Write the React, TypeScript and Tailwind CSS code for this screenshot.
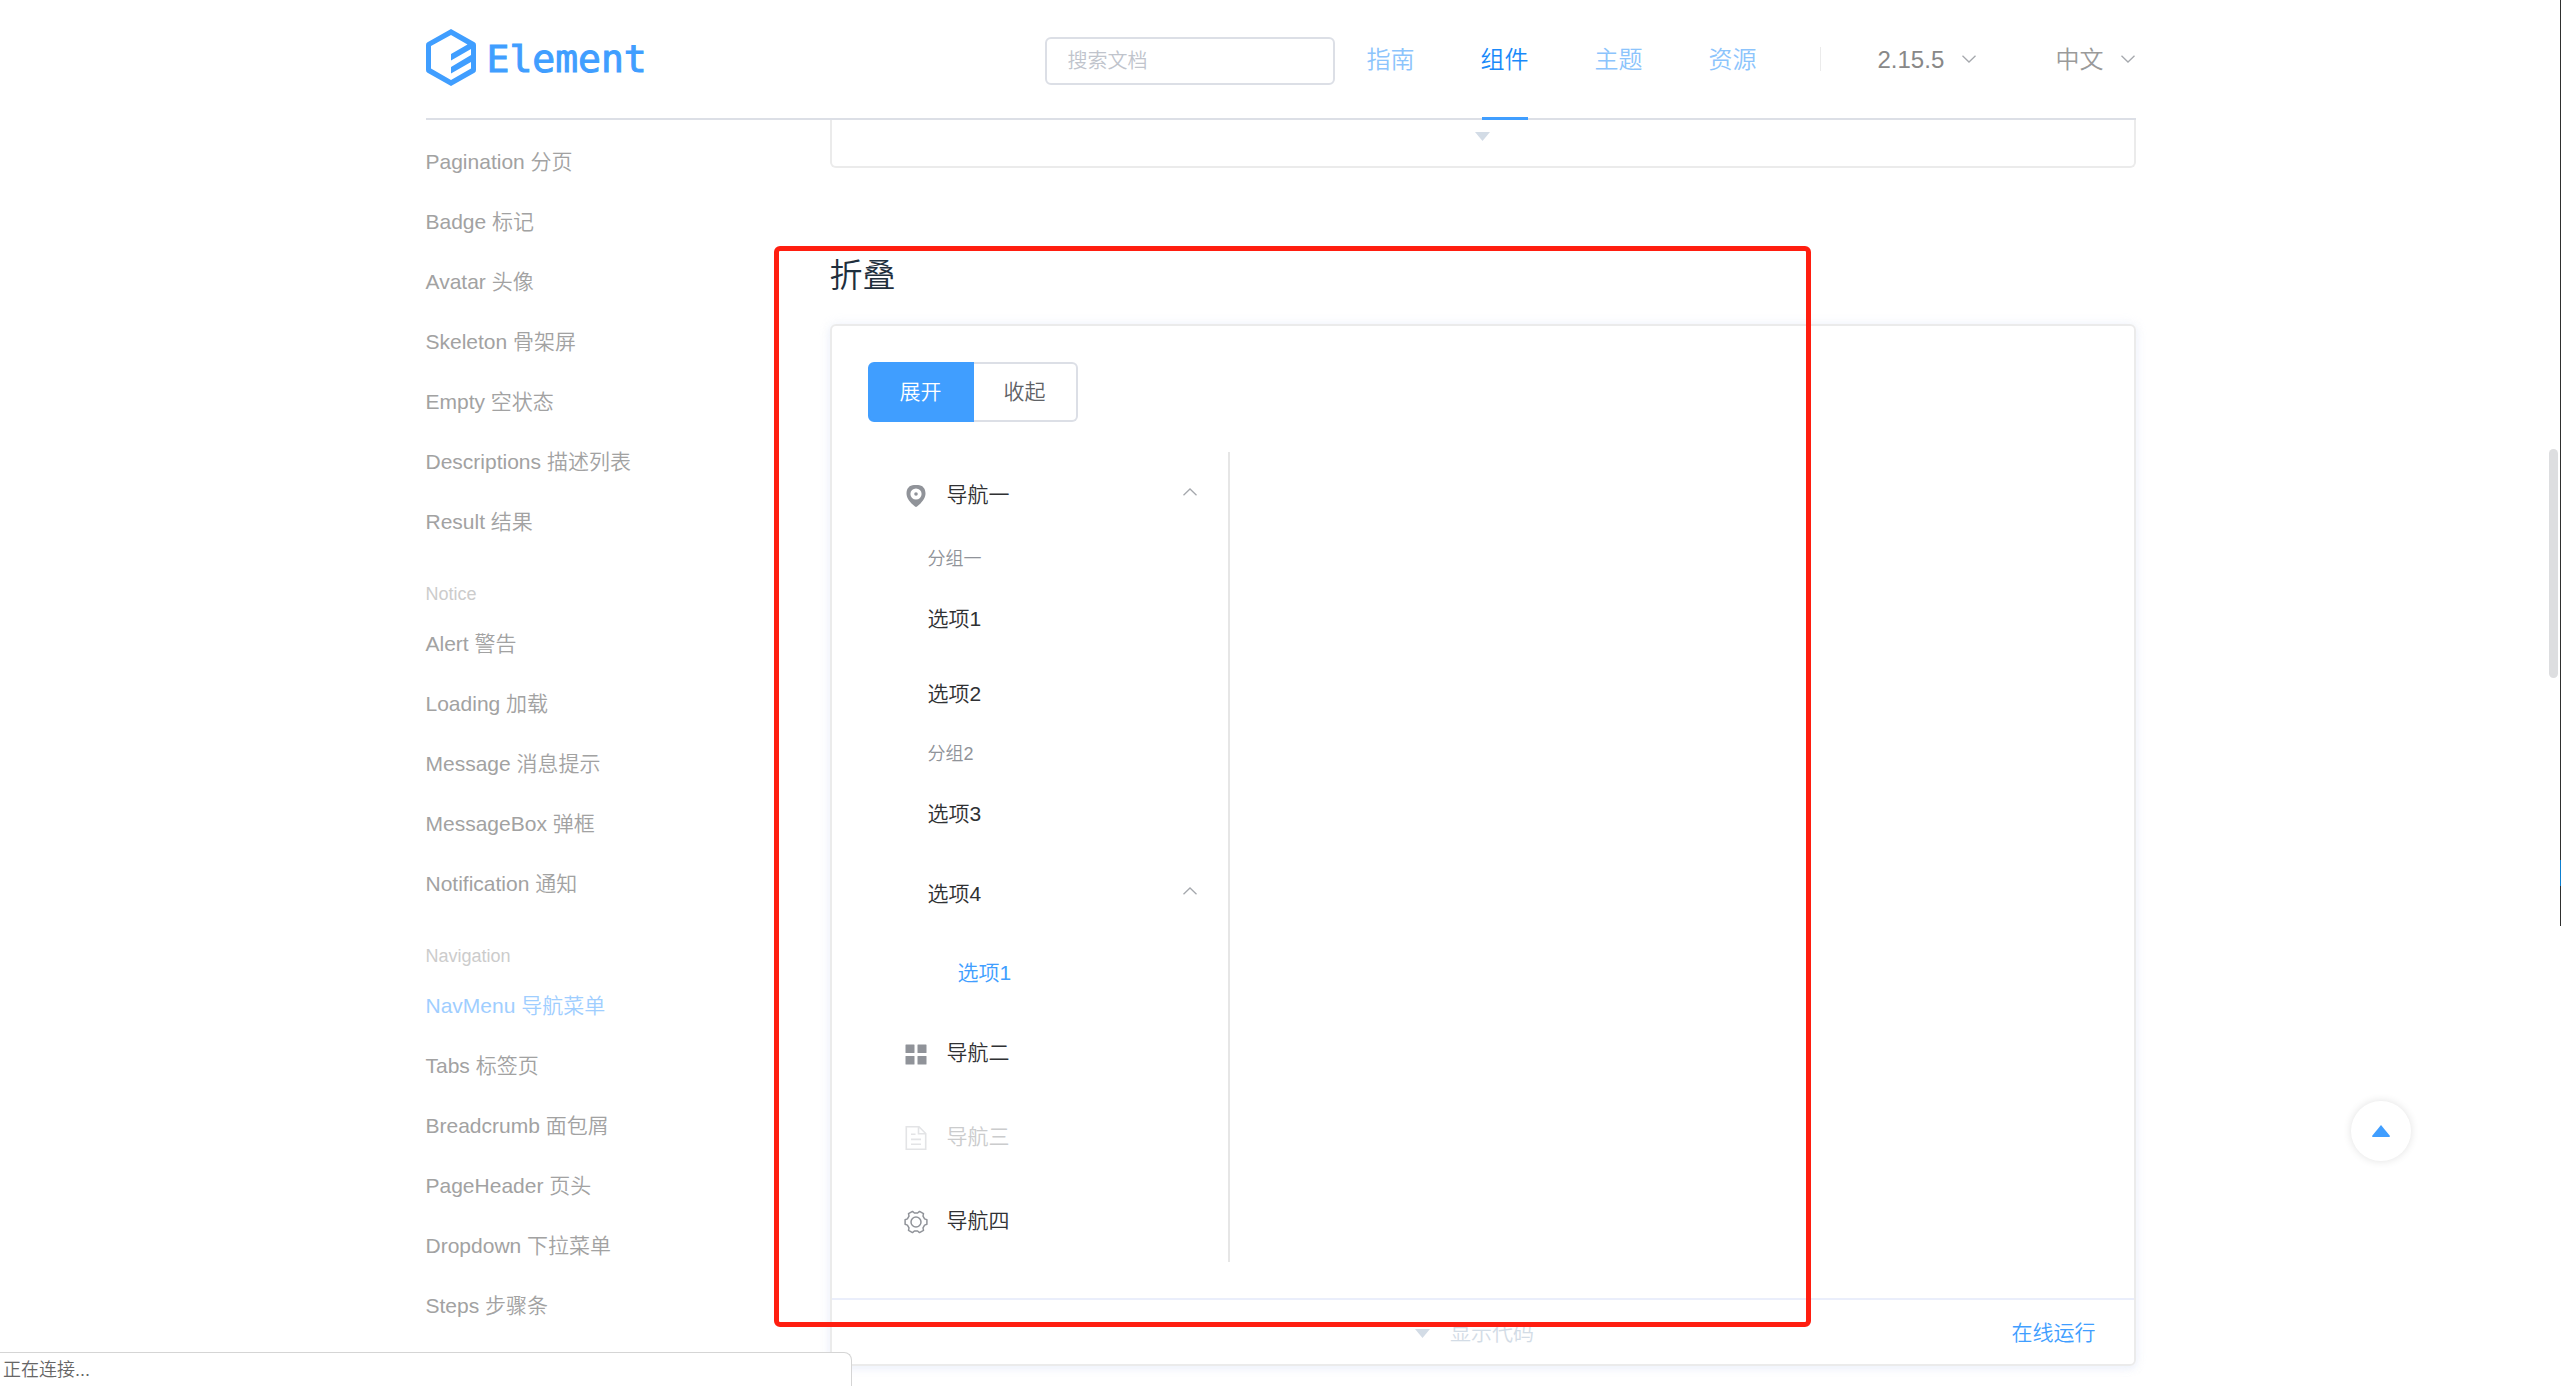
import { useState } from 'react';
import type { ReactNode } from 'react';
import clsx from 'clsx';

interface NavGroup {
    title?: string;
    items: string[];
}

const navLinks = ['指南', '组件', '主题', '资源'];

const sidebarGroups: NavGroup[] = [
    {
        items: [
            'Pagination 分页',
            'Badge 标记',
            'Avatar 头像',
            'Skeleton 骨架屏',
            'Empty 空状态',
            'Descriptions 描述列表',
            'Result 结果',
        ],
    },
    {
        title: 'Notice',
        items: ['Alert 警告', 'Loading 加载', 'Message 消息提示', 'MessageBox 弹框', 'Notification 通知'],
    },
    {
        title: 'Navigation',
        items: [
            'NavMenu 导航菜单',
            'Tabs 标签页',
            'Breadcrumb 面包屑',
            'PageHeader 页头',
            'Dropdown 下拉菜单',
            'Steps 步骤条',
        ],
    },
];

function LogoMark() {
    return (
        <svg viewBox="0 0 50 57" className="h-[57px] w-[50px]" fill="#409eff" aria-hidden="true">
            <path
                fillRule="evenodd"
                d="M25 0 L48.5 13.2 Q50 14 50 16 V41 Q50 43 48.5 43.8 L25 57 L1.5 43.8 Q0 43 0 41 V16 Q0 14 1.5 13.2Z M5 17 V39.5 L25 51 L45 39.5 V33 L25 44.5 V38 L45 26 V20 L25 31.5 V25 L41.5 15.5 L25 6Z"
            />
        </svg>
    );
}

function Chevron({ up = false, className }: { up?: boolean; className?: string }) {
    return (
        <svg viewBox="0 0 16 8" className={clsx('h-2 w-4', className)} fill="none" stroke="#a5a8ad" strokeWidth="1.3" aria-hidden="true">
            <path d={up ? 'M1.5 7.2 L8 1 L14.5 7.2' : 'M1.5 0.8 L8 7 L14.5 0.8'} />
        </svg>
    );
}

function CaretDown() {
    return (
        <svg viewBox="0 0 15 9" className="h-[9px] w-[15px]" fill="#d3dce6" aria-hidden="true">
            <path d="M0 0 H15 L7.5 9Z" />
        </svg>
    );
}

function LocationIcon() {
    return (
        <svg viewBox="0 0 24 24" className="size-6" fill="#909399" aria-hidden="true">
            <path
                fillRule="evenodd"
                d="M10 1 H14 C18.5 1 21.5 4.5 21.5 9.5 C21.5 14 18.5 17 16.5 19.5 L13 22.6 Q12 23.3 11 22.6 L7.5 19.5 C5.5 17 2.5 14 2.5 9.5 C2.5 4.5 5.5 1 10 1Z M12 4.4 a5.6 5.6 0 1 0 0 11.2 a5.6 5.6 0 1 0 0 -11.2Z"
            />
            <circle cx="12" cy="10" r="1.8" />
        </svg>
    );
}

function GridIcon() {
    return (
        <svg viewBox="0 0 24 24" className="size-6" fill="#909399" aria-hidden="true">
            <rect x="1.5" y="2.5" width="9" height="8.5" rx="0.5" />
            <rect x="13.5" y="2.5" width="9" height="8.5" rx="0.5" />
            <rect x="1.5" y="14" width="9" height="8.5" rx="0.5" />
            <rect x="13.5" y="14" width="9" height="8.5" rx="0.5" />
        </svg>
    );
}

function DocumentIcon() {
    return (
        <svg viewBox="0 0 24 24" className="size-6" fill="none" stroke="#e3e4e6" strokeWidth="1.6" aria-hidden="true">
            <path d="M2.3 0.8 H15 L21.7 7.5 V23.2 H2.3Z M14.5 1 V7.8 H21.5 M7 8.2 H11.5 M7 13.4 H17 M7 18.2 H17" />
        </svg>
    );
}

function SettingIcon() {
    return (
        <svg viewBox="0 0 24 24" className="size-6" fill="none" stroke="#909399" strokeWidth="1.5" strokeLinejoin="round" aria-hidden="true">
            <path d="M22.9 14.3 L20.6 15.1 L19 17.9 L19.5 20.3 L15.5 22.6 L13.6 21 H10.4 L8.5 22.6 L4.5 20.3 L5 17.9 L3.4 15.1 L1.1 14.3 V9.7 L3.4 8.9 L5 6.1 L4.5 3.7 L8.5 1.4 L10.4 3 H13.6 L15.5 1.4 L19.5 3.7 L19 6.1 L20.6 8.9 L22.9 9.7Z" />
            <circle cx="12" cy="12" r="5" />
        </svg>
    );
}

function HeaderSelect({ label, value, className }: { label: string; value: string; className: string }) {
    return (
        <label className={clsx('flex items-center gap-4', className)}>
            <select aria-label={label} className="appearance-none bg-transparent pt-0.5 text-2xl" defaultValue={value}>
                <option>{value}</option>
            </select>
            <Chevron />
        </label>
    );
}

function Header() {
    return (
        <header className="mx-auto flex h-[120px] w-full max-w-[1710px] items-stretch border-b-2 border-[#dcdfe6]">
            <a href="#" className="flex items-center gap-[11px] pb-1">
                <LogoMark />
                <span className="pt-1 font-['DejaVu_Sans_Mono',monospace] text-[38px] leading-none font-normal text-[#409eff] [-webkit-text-stroke:1px_#409eff]">
                    Element
                </span>
            </a>
            <div className="ml-auto flex items-center pt-1">
                <input
                    type="text"
                    aria-label="搜索文档"
                    placeholder="搜索文档"
                    className="mr-8 h-12 w-[290px] rounded-md border-2 border-[#dcdfe6] px-[21px] text-xl outline-none placeholder:text-[#c0c4cc]"
                />
            </div>
            <nav className="flex gap-[66px]">
                {navLinks.map((link) => (
                    <a
                        key={link}
                        href="#"
                        className={clsx(
                            'relative flex items-center pt-0.5 text-2xl',
                            link === '组件'
                                ? 'text-[#1989fa] after:absolute after:inset-x-px after:-bottom-0.5 after:h-[3px] after:bg-[#409eff]'
                                : 'text-[#8cc4fc]',
                        )}
                    >
                        {link}
                    </a>
                ))}
            </nav>
            <div className="ml-[63px] flex items-center">
                <span className="h-6 w-px bg-[#ebebeb]" />
                <HeaderSelect label="版本" value="2.15.5" className="ml-[57px] text-[#888]" />
                <HeaderSelect label="语言" value="中文" className="ml-[79px] text-[#9a9a9a]" />
            </div>
        </header>
    );
}

function Sidebar() {
    return (
        <aside className="w-[404px] shrink-0 pt-3">
            {sidebarGroups.map((group, index) => (
                <div key={index}>
                    {group.title && <div className="mt-[22px] text-lg leading-10 text-[#ccc]">{group.title}</div>}
                    <ul>
                        {group.items.map((item) => (
                            <li key={item}>
                                <a
                                    href="#"
                                    className={clsx(
                                        'block text-[21px] leading-[60px] whitespace-nowrap',
                                        item.startsWith('NavMenu') ? 'text-[#9fceff]' : 'text-[#a2a2a2]',
                                    )}
                                >
                                    {item}
                                </a>
                            </li>
                        ))}
                    </ul>
                </div>
            ))}
        </aside>
    );
}

function RootItem({ icon, label, disabled, open }: { icon: ReactNode; label: string; disabled?: boolean; open?: boolean }) {
    return (
        <button
            type="button"
            disabled={disabled}
            aria-expanded={open}
            className={clsx('flex h-[84px] w-full items-center px-[30px] pt-0.5', disabled ? 'text-[#cbcccd]' : 'text-[#303133]')}
        >
            <span className="mr-[13px] flex w-9 justify-center pt-0.5">{icon}</span>
            {label}
            {open && <Chevron up className="mb-1.5 ml-auto" />}
        </button>
    );
}

function GroupTitle({ children }: { children: ReactNode }) {
    return <div className="h-[45px] pl-[60px] text-lg leading-[47px] text-[#909399]">{children}</div>;
}

function MenuItem({ children, nested }: { children: ReactNode; nested?: boolean }) {
    return (
        <button
            type="button"
            className={clsx('block h-[75px] w-full text-left', nested ? 'pl-[90px] text-[#409eff]' : 'pl-[60px] text-[#303133]')}
        >
            {children}
        </button>
    );
}

function NavMenu() {
    return (
        <div className="mt-[30px] w-[362px] border-r-2 border-[#e6e6e6] text-[21px]">
            <RootItem icon={<LocationIcon />} label="导航一" open />
            <GroupTitle>分组一</GroupTitle>
            <MenuItem>选项1</MenuItem>
            <MenuItem>选项2</MenuItem>
            <GroupTitle>分组2</GroupTitle>
            <MenuItem>选项3</MenuItem>
            <button
                type="button"
                aria-expanded="true"
                className="flex h-[84px] w-full items-center pt-0.5 pr-[30px] pl-[60px] text-[#303133]"
            >
                选项4
                <Chevron up className="mb-1.5 ml-auto" />
            </button>
            <MenuItem nested>选项1</MenuItem>
            <RootItem icon={<GridIcon />} label="导航二" />
            <RootItem icon={<DocumentIcon />} label="导航三" disabled />
            <RootItem icon={<SettingIcon />} label="导航四" />
        </div>
    );
}

function CollapseDemo() {
    const [mode, setMode] = useState('展开');

    return (
        <section className="rounded-md border-2 border-[#ebebeb] shadow-[0_0_12px_rgba(232,237,250,0.6),0_3px_6px_rgba(232,237,250,0.5)]">
            <div className="p-9">
                <div className="flex text-[21px]">
                    {['展开', '收起'].map((option) => (
                        <label
                            key={option}
                            className={clsx(
                                'flex h-[60px] cursor-pointer items-center border-2 px-[30px] first:rounded-l-md last:rounded-r-md last:border-l-0',
                                mode === option ? 'border-[#409eff] bg-[#409eff] text-white' : 'border-[#dcdfe6] text-[#606266]',
                            )}
                        >
                            <input
                                type="radio"
                                name="collapse"
                                className="sr-only"
                                checked={mode === option}
                                onChange={() => setMode(option)}
                            />
                            {option}
                        </label>
                    ))}
                </div>
                <NavMenu />
            </div>
            <div className="relative flex h-[66px] items-center justify-center border-t-2 border-[#eaeefb] pt-0.5 text-[21px]">
                <button type="button" className="mr-4 flex items-center gap-5 text-[#d3dce6]">
                    <CaretDown />
                    显示代码
                </button>
                <a href="#" className="absolute right-[38px] text-[#409eff]">
                    在线运行
                </a>
            </div>
        </section>
    );
}

export default function App() {
    return (
        <div className="relative min-h-screen overflow-hidden bg-white font-['Liberation_Sans','Noto_Sans_CJK_SC',sans-serif] font-[350]">
            <Header />
            <div className="mx-auto flex w-full max-w-[1710px]">
                <Sidebar />
                <main className="relative min-w-0 flex-1">
                    <div className="flex h-12 justify-center rounded-b-md border-2 border-t-0 border-[#ebebeb] pt-3">
                        <CaretDown />
                    </div>
                    <h2 className="mt-[82px] mb-[22px] text-[33px] leading-[52px] font-[350] text-[#1f2f3d]">折叠</h2>
                    <CollapseDemo />
                    {/* Marco de anotación */}
                    <div className="pointer-events-none absolute top-[126px] -left-14 h-[1081px] w-[1037px] rounded-md border-[5px] border-[#ff1e10]" />
                </main>
            </div>

            <button
                type="button"
                aria-label="回到顶部"
                className="fixed right-[150px] bottom-[225px] flex size-[60px] items-center justify-center rounded-full bg-white shadow-[0_0_9px_rgba(0,0,0,0.12)]"
            >
                <svg viewBox="0 0 18 12" className="h-3 w-[18px]" fill="#409eff" aria-hidden="true">
                    <path d="M9 0 L18 11 Q18 12 17 12 H1 Q0 12 0 11Z" />
                </svg>
            </button>

            <div className="fixed top-[449px] right-[3px] h-[229px] w-[9px] rounded-full bg-[#dddee0]" />
            <div className="fixed top-0 right-0 h-[926px] w-px bg-[#2f302f]">
                <div className="mt-[860px] h-[26px] bg-[#0d7fd0]" />
            </div>

            <div className="fixed bottom-0 left-0 h-[34px] w-[852px] rounded-tr-lg border-t border-r border-[#d5d5d5] bg-white pl-[3px] text-lg leading-[34px] text-[#666]">
                正在连接...
            </div>
        </div>
    );
}
